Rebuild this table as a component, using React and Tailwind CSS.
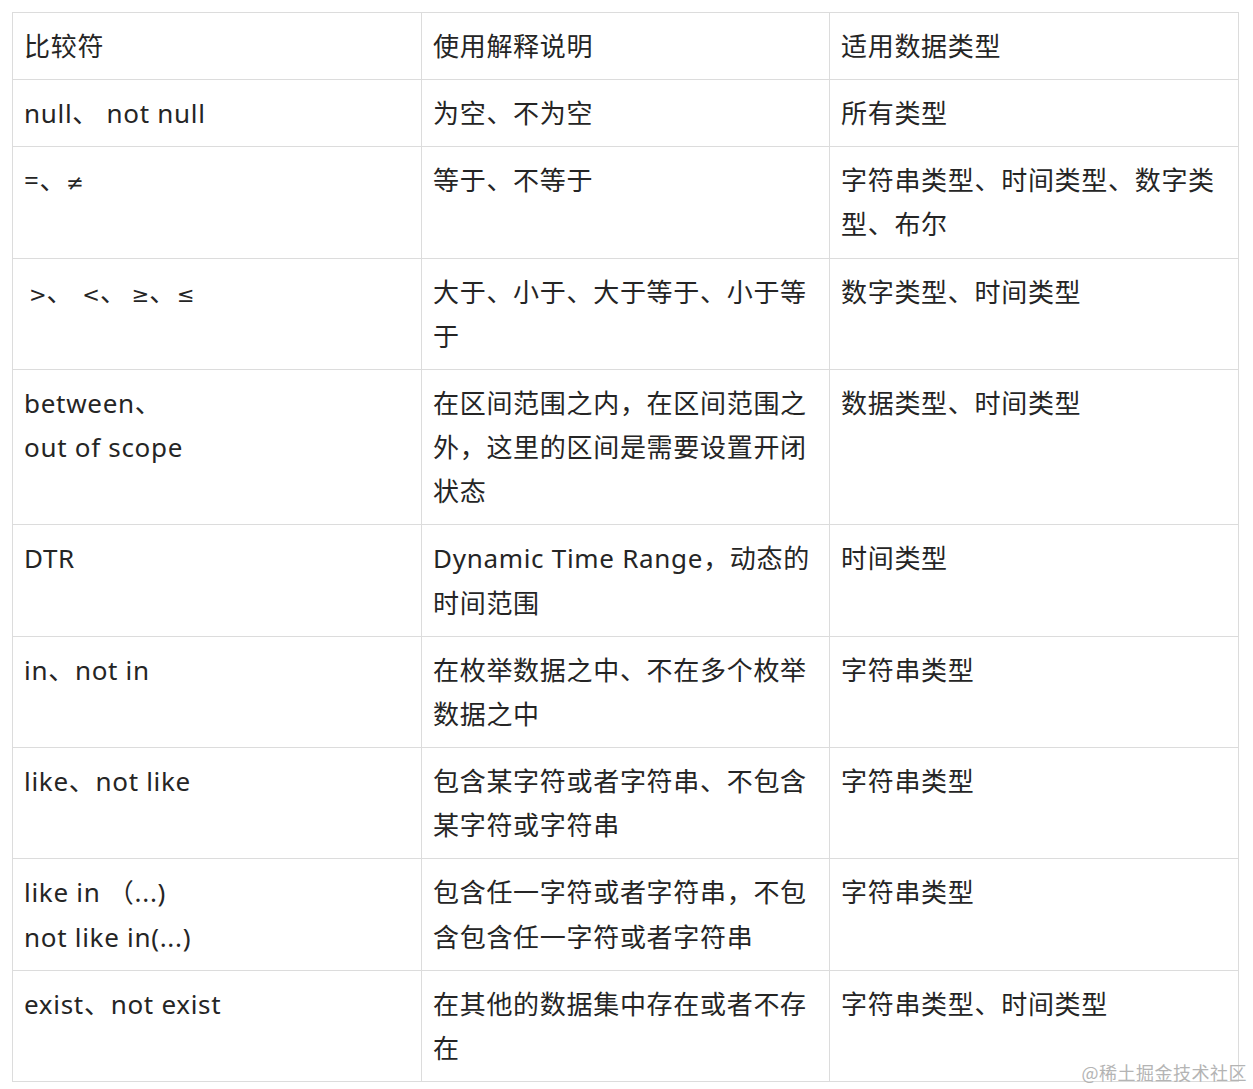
const M = ({ children, cls = "" }) => (
  <span style={{ fontFamily: '"DejaVu Sans", sans-serif' }} className={"text-[21px] tracking-normal " + cls}>{children}</span>
);

const rows = [
  [["比较符"], ["使用解释说明"], ["适用数据类型"]],
  [["null、 not null"], ["为空、不为空"], ["所有类型"]],
  [[<>=、<M>≠</M></>], ["等于、不等于"], ["字符串类型、时间类型、数字类型、布尔"]],
  [[<><M cls="ml-[5px]">&gt;</M>、<M cls="ml-[9px]">&lt;</M>、<M cls="ml-[5px]">≥</M>、<M cls="ml-[1px]">≤</M></>], ["大于、小于、大于等于、小于等于"], ["数字类型、时间类型"]],
  [["between、", "out of scope"], ["在区间范围之内，在区间范围之外，这里的区间是需要设置开闭状态"], ["数据类型、时间类型"]],
  [["DTR"], ["Dynamic Time Range，动态的时间范围"], ["时间类型"]],
  [["in、not in"], ["在枚举数据之中、不在多个枚举数据之中"], ["字符串类型"]],
  [["like、not like"], ["包含某字符或者字符串、不包含某字符或字符串"], ["字符串类型"]],
  [["like in （...)", "not like in(...)"], ["包含任一字符或者字符串，不包含包含任一字符或者字符串"], ["字符串类型"]],
  [["exist、not exist"], ["在其他的数据集中存在或者不存在"], ["字符串类型、时间类型"]],
];

export default function App() {
  return (
    <div className="relative w-[1253px] h-[1089px] bg-white overflow-hidden" style={{ fontFamily: '"Noto Sans", "Noto Sans CJK SC", sans-serif' }}>
      <div className="pl-[12px] pt-[12px]">
        <table className="border-collapse table-fixed w-[1226px] text-[#252525] text-[26px] leading-[44.15px] tracking-[0.7px]">
          <colgroup>
            <col className="w-[409px]" />
            <col className="w-[408px]" />
            <col className="w-[409px]" />
          </colgroup>
          <tbody>
            {rows.map((r, i) => (
              <tr key={i}>
                {r.map((c, j) => (
                  <td key={j} className="border border-[#dcdcdc] px-[11px] py-[11px] align-top whitespace-pre-wrap break-all">
                    {c.map((line, k) => (
                      <div key={k}>{line}</div>
                    ))}
                  </td>
                ))}
              </tr>
            ))}
          </tbody>
        </table>
      </div>
      <div className="absolute right-[6px] top-[1060px] text-[18px] leading-[24px] text-[#b4b4b4] tracking-[0.5px]" style={{ fontFamily: '"Noto Sans CJK SC", serif' }}>
        @稀土掘金技术社区
      </div>
    </div>
  );
}
